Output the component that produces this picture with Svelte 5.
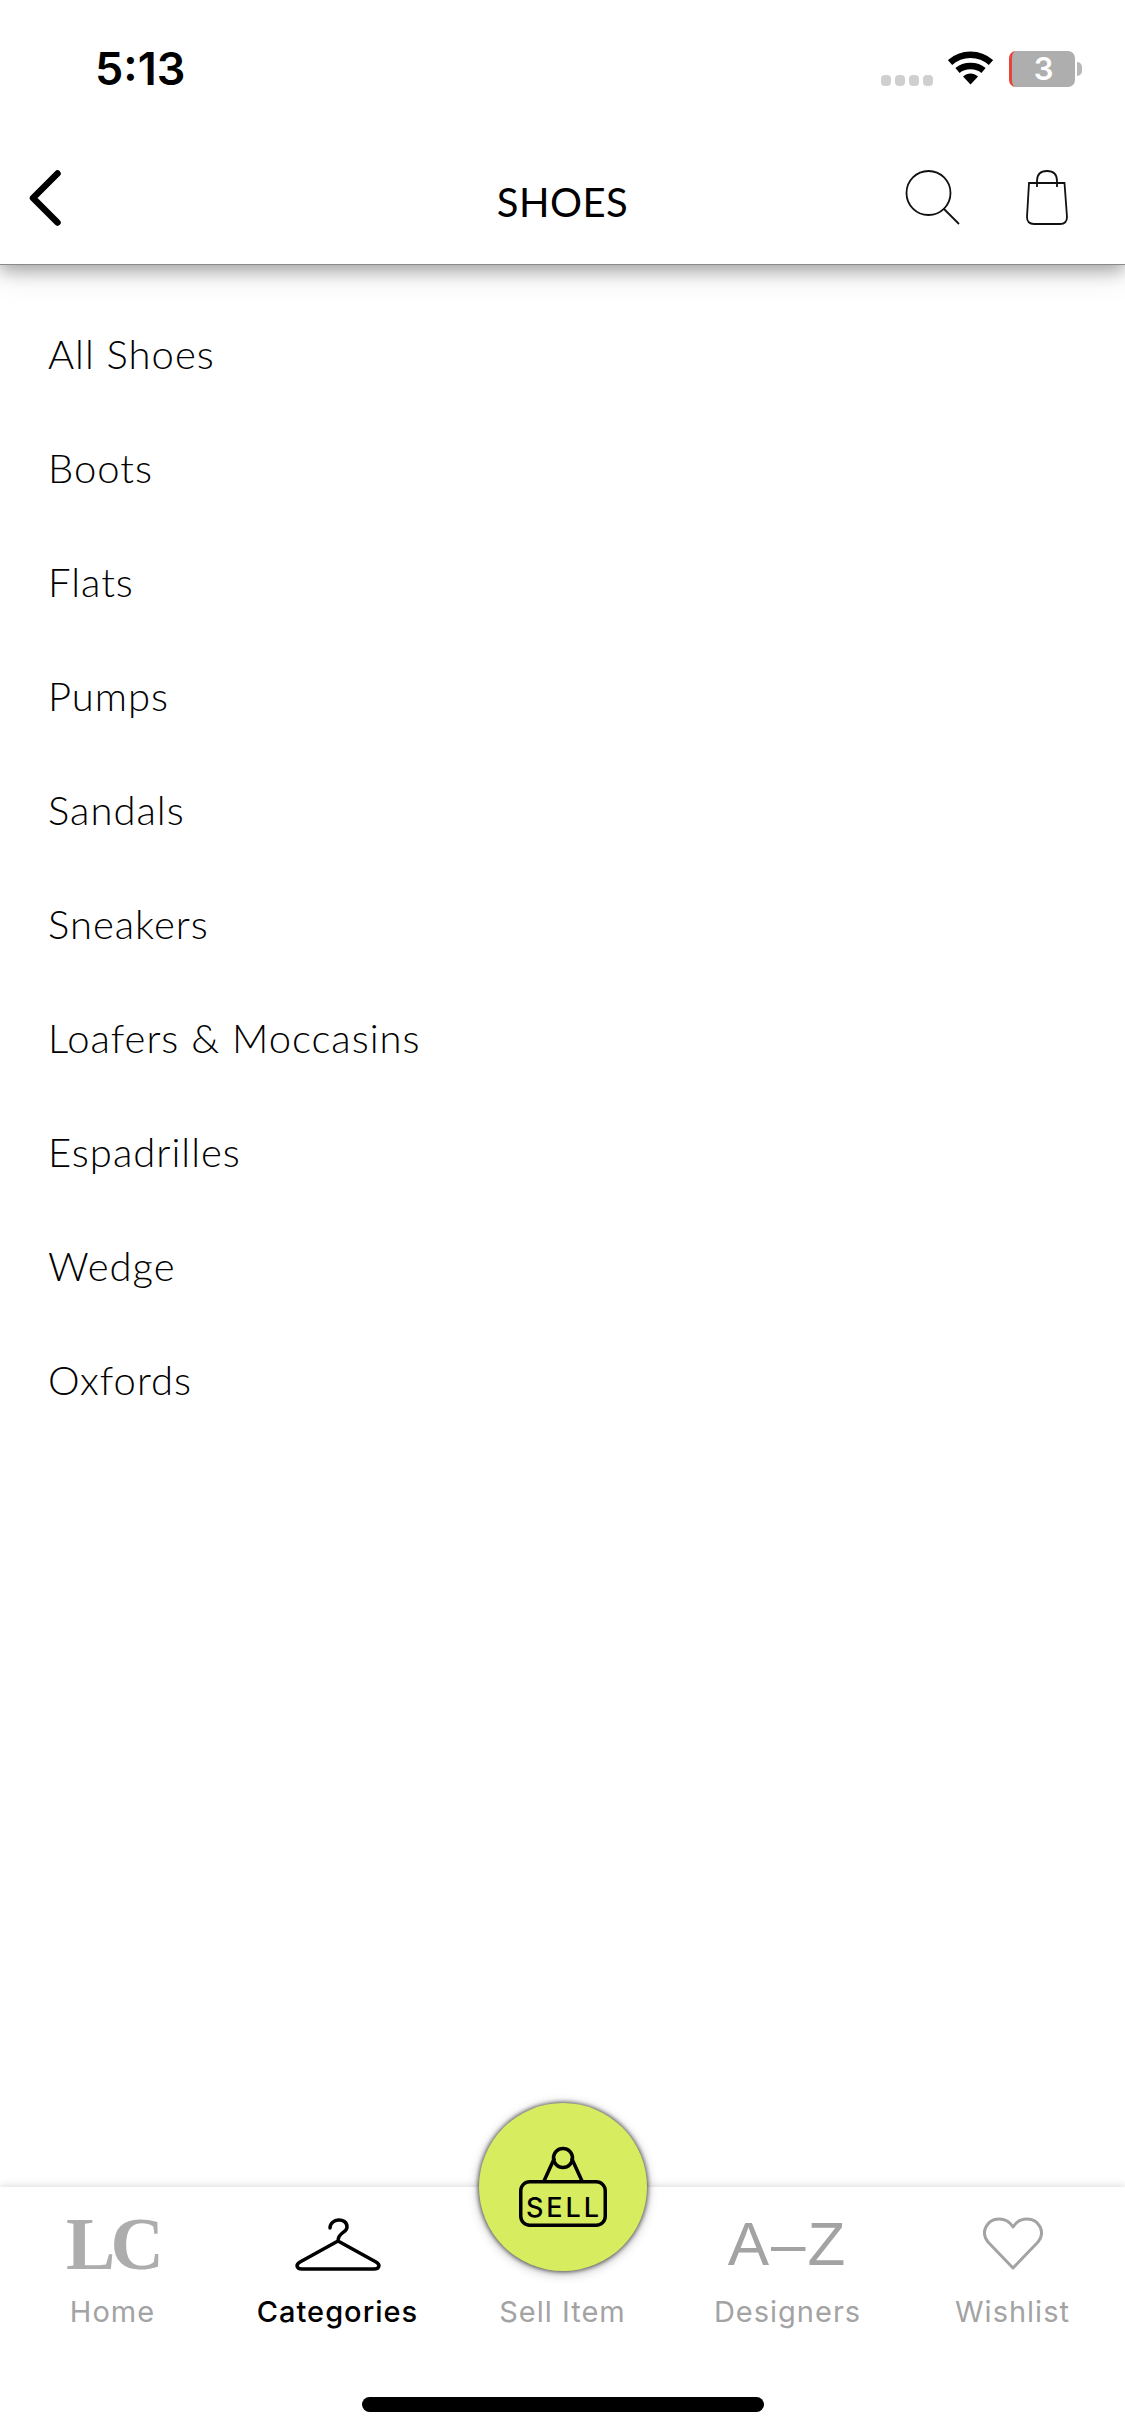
<script lang="ts">
	const categories = [
		'All Shoes',
		'Boots',
		'Flats',
		'Pumps',
		'Sandals',
		'Sneakers',
		'Loafers & Moccasins',
		'Espadrilles',
		'Wedge',
		'Oxfords'
	];
</script>

<div class="screen">
	<header class="top">
		<div class="status">
			<span class="time">5:13</span>
			<div class="status-icons">
				<div class="dots"><i></i><i></i><i></i><i></i></div>
				<svg class="wifi" width="45" height="34" viewBox="0 0 45 34">
					<path d="M2 11.5C13.5 1 31.5 1 43 11.5" fill="none" stroke="#000" stroke-width="6.5" />
					<path d="M9.5 19.5C16.5 13.5 28.5 13.5 35.5 19.5" fill="none" stroke="#000" stroke-width="6.5" />
					<path d="M15 25.5C19.5 21.5 25.5 21.5 30 25.5L22.5 33.5Z" fill="#000" />
				</svg>
				<div class="battery"><span>3</span></div>
				<div class="nub"></div>
			</div>
		</div>
		<div class="bar">
			<div class="bar-left">
				<svg class="back" width="32" height="56" viewBox="0 0 32 56">
					<path d="M28.5 3.500L4 28L28.5 52.500" fill="none" stroke="#000" stroke-width="6.500" stroke-linecap="round" stroke-linejoin="round" />
				</svg>
			</div>
			<h1>SHOES</h1>
			<div class="bar-right">
				<svg class="search" width="55" height="55" viewBox="0 0 55 55">
					<circle cx="23.500" cy="23" r="22" fill="none" stroke="#111" stroke-width="1.800" />
					<path d="M39 39L54 54" fill="none" stroke="#111" stroke-width="1.800" />
				</svg>
				<svg class="bag" width="42" height="55" viewBox="0 0 42 55">
					<path d="M3 13H38.500L41 47Q41 54 34 54H8Q1 54 1 47Z" fill="none" stroke="#111" stroke-width="1.800" />
					<path d="M11 17V11Q11 1 21 1Q31 1 31 11V17" fill="none" stroke="#111" stroke-width="1.800" />
				</svg>
			</div>
		</div>
	</header>

	<ul class="list">
		{#each categories as name}
			<li>{name}</li>
		{/each}
	</ul>

	<nav class="tabs">
		<div class="fab">
			<svg width="92" height="84" viewBox="0 0 92 84">
				<circle cx="46" cy="12" r="9.500" fill="none" stroke="#000" stroke-width="3.500" />
				<path d="M27 35L37.500 12M65 35L54.500 12" fill="none" stroke="#000" stroke-width="3.500" />
				<rect x="3.750" y="35.750" width="84.500" height="43.500" rx="9" fill="none" stroke="#000" stroke-width="3.500" />
				<text x="9" y="71" textLength="73" lengthAdjust="spacing" class="sell">SELL</text>
			</svg>
		</div>
		<div class="tab">
			<div class="slot"><span class="lc">LC</span></div>
			<span class="label">Home</span>
		</div>
		<div class="tab active">
			<div class="slot">
				<svg width="86" height="54" viewBox="0 0 86 54">
					<path d="M35 11C35 1 52 0 52 10C52 16 43 15 43 24M43 24L81 45C86 48 84 52 79 52H7C2 52 0 48 5 45Z" fill="none" stroke="#000" stroke-width="3.500" stroke-linejoin="round" stroke-linecap="round" />
				</svg>
			</div>
			<span class="label">Categories</span>
		</div>
		<div class="tab">
			<div class="slot"></div>
			<span class="label">Sell Item</span>
		</div>
		<div class="tab">
			<div class="slot"><span class="az">A–Z</span></div>
			<span class="label">Designers</span>
		</div>
		<div class="tab">
			<div class="slot">
				<svg width="60" height="53" viewBox="0 0 60 53">
					<path d="M30 51L5 25C-3 15 4 2 16 2C23 2 27 5 30 10C33 5 37 2 44 2C56 2 63 15 55 25Z" fill="none" stroke="#a3a3a3" stroke-width="3" stroke-linejoin="round" />
				</svg>
			</div>
			<span class="label">Wishlist</span>
		</div>
		<div class="home-indicator"></div>
	</nav>
</div>

<style>
	:global(body) {
		margin: 0;
		background: #fff;
	}
	.screen {
		width: 1125px;
		height: 2436px;
		display: flex;
		flex-direction: column;
		overflow: hidden;
		background: #fff;
		font-family: 'Inter', 'Liberation Sans', sans-serif;
		color: #000;
	}
	.top {
		position: relative;
		z-index: 2;
		height: 264px;
		border-bottom: 1px solid #8a8a8a;
		box-shadow: 0 6px 16px rgba(0, 0, 0, 0.32), 0 16px 30px rgba(0, 0, 0, 0.06);
		background: #fff;
	}
	.status {
		height: 137px;
		display: flex;
		justify-content: space-between;
		align-items: flex-start;
		padding: 0 43px 0 95px;
	}
	.time {
		margin-top: 42px;
		font-size: 45px;
		line-height: 54px;
		font-weight: 600;
	}
	.status-icons {
		display: flex;
		align-items: flex-start;
		margin-top: 51px;
	}
	.dots {
		display: flex;
		gap: 4px;
		margin-top: 24px;
		margin-right: 15px;
	}
	.dots i {
		width: 10px;
		height: 11px;
		border-radius: 4px;
		background: #cfcfcf;
	}
	.wifi {
		margin-right: 16px;
	}
	.battery {
		width: 63px;
		height: 36px;
		border-radius: 7px;
		border-left: 3px solid #e8443a;
		background: #aeaeae;
		color: #fff;
		font-size: 31px;
		font-weight: 600;
		line-height: 36px;
		text-align: center;
	}
	.nub {
		width: 5px;
		height: 14px;
		margin: 11px 0 0 2px;
		border-radius: 0 5px 5px 0;
		background: #b8b8b8;
	}
	.bar {
		height: 126px;
		display: grid;
		grid-template-columns: 1fr auto 1fr;
		align-items: start;
	}
	.bar-left {
		padding: 33px 0 0 29px;
	}
	.bar-right {
		display: flex;
		justify-content: flex-end;
		padding-top: 33px;
	}
	.bar h1 {
		margin: 41px 0 0;
		font-family: 'Lato', 'Liberation Sans', sans-serif;
		font-size: 40px;
		line-height: 48px;
		font-weight: 400;
		letter-spacing: 0.5px;
	}
	.search {
		margin-right: 66px;
	}
	.bag {
		margin-right: 57px;
	}
	.list {
		flex: 1;
		margin: 0;
		padding: 32px 0 0 48px;
		list-style: none;
		font-family: 'Lato', 'Liberation Sans', sans-serif;
		font-weight: 300;
		font-size: 40px;
		letter-spacing: 1px;
	}
	.list li {
		height: 114px;
		line-height: 114px;
		color: #000;
	}
	.tabs {
		position: relative;
		height: 249px;
		display: grid;
		grid-template-columns: repeat(5, 225px);
		align-content: start;
		background: #fff;
		box-shadow: 0 -2px 7px rgba(0, 0, 0, 0.12);
	}
	.tab {
		display: flex;
		flex-direction: column;
		align-items: center;
		padding-top: 30px;
	}
	.slot {
		height: 54px;
		display: flex;
		justify-content: center;
		align-items: flex-start;
	}
	.label {
		margin-top: 23px;
		font-size: 29px;
		line-height: 36px;
		letter-spacing: 1px;
		color: #a3a3a3;
	}
	.active .label {
		color: #000;
		font-weight: 500;
	}
	.lc {
		font-family: 'Liberation Serif', serif;
		font-weight: 700;
		font-size: 74px;
		line-height: 54px;
		letter-spacing: -5px;
		white-space: nowrap;
		color: #adadad;
	}
	.az {
		font-family: 'Liberation Sans', sans-serif;
		font-size: 62px;
		line-height: 54px;
		color: #a3a3a3;
		letter-spacing: 2px;
	}
	.fab {
		position: absolute;
		left: 479px;
		top: -84px;
		width: 168px;
		height: 168px;
		box-sizing: border-box;
		padding-top: 43px;
		border-radius: 50%;
		background: #d7ec5e;
		box-shadow: 0 0 4px 1px rgba(0, 0, 0, 0.6), 0 2px 12px rgba(0, 0, 0, 0.3);
		display: flex;
		justify-content: center;
		align-items: flex-start;
	}
	.sell {
		font-family: 'Inter', sans-serif;
		font-size: 27px;
		font-weight: 500;
	}
	.home-indicator {
		position: absolute;
		left: 362px;
		top: 210px;
		width: 402px;
		height: 15px;
		border-radius: 8px;
		background: #000;
	}
</style>
